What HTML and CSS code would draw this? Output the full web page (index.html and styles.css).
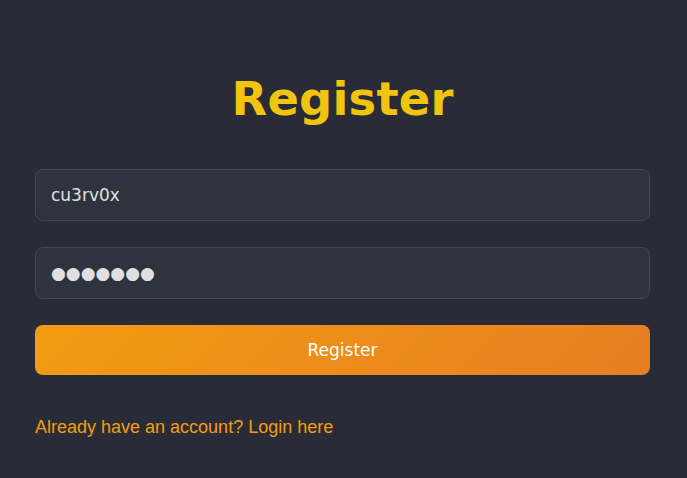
FILE: index.html
```html
<!DOCTYPE html>
<html lang="en">
  <head>
    <meta charset="UTF-8" />
    <meta name="viewport" content="width=device-width, initial-scale=1.0" />
    <title>Register</title>
    <link rel="stylesheet" href="styles.css">
  </head>
  <body>
    <div class="page">
      <h1 class="title">Register</h1>
      <form class="register-form">
        <input type="text" class="field" value="cu3rv0x" placeholder="Username" />
        <input type="text" class="field" value="●●●●●●●" placeholder="Password" />
        <button type="button" class="submit">Register</button>
      </form>
      <p class="switch"><a href="#">Already have an account? Login here</a></p>
    </div>
  </body>
</html>
```

FILE: styles.css
```css
body {
  margin: 0;
  background-color: #292c37;
  font-family: "DejaVu Sans", sans-serif;
  height: 100vh;
}
.page {
  padding: 72px 37px 0 35px;
}
.title {
  margin: 0 0 43px;
  text-align: center;
  font-family: "DejaVu Sans", sans-serif;
  font-size: 2.9rem;
  font-weight: bold;
  letter-spacing: 0.2px;
  color: #f1c40f;
}
.register-form {
  display: flex;
  flex-direction: column;
  gap: 26px;
}
.field {
  box-sizing: border-box;
  height: 52px;
  padding: 0 15px;
  background-color: #2f333e;
  border: 1px solid #46464b;
  border-radius: 8px;
  color: #e0e0e0;
  font-family: "DejaVu Sans", sans-serif;
  font-size: 17px;
  outline: none;
}
.submit {
  height: 50px;
  border: none;
  border-radius: 8px;
  background: linear-gradient(135deg, #f39c12, #e67e22);
  color: #fff;
  font-family: "DejaVu Sans", sans-serif;
  font-size: 17px;
  cursor: pointer;
}
.switch {
  margin: 42px 0 0;
  font-family: "Liberation Sans", Arial, sans-serif;
  font-size: 18px;
}
.switch a {
  color: #f39c12;
  text-decoration: none;
}
```
